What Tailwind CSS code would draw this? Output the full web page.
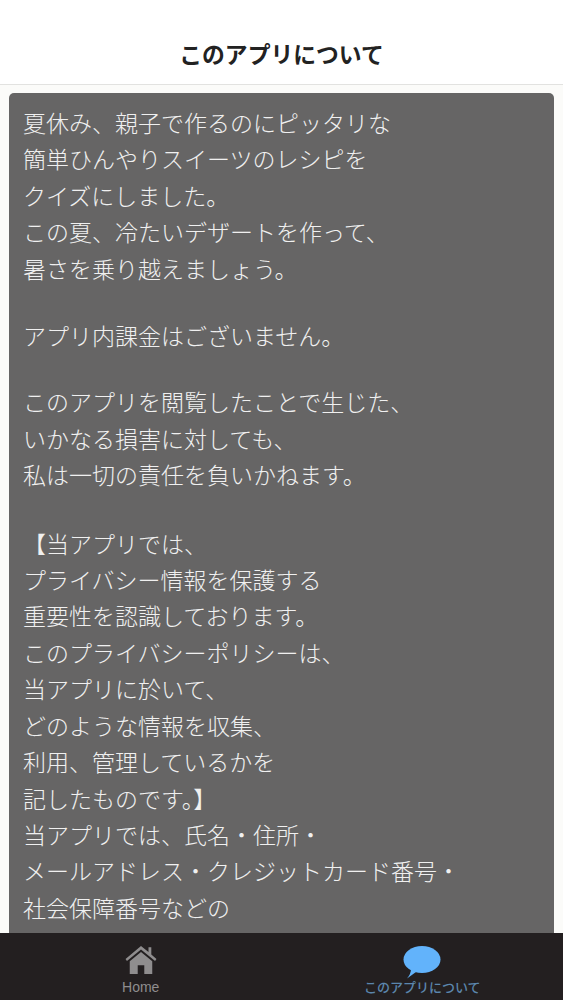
<!DOCTYPE html>
<html lang="ja">
<head>
    <meta charset="UTF-8">
    <meta name="viewport" content="width=device-width, initial-scale=1.0">
    <title>このアプリについて</title>
    <script src="https://cdn.jsdelivr.net/npm/@tailwindcss/browser@4"></script>
</head>
<body class="bg-[#fbfbf9] font-['Noto_Sans_CJK_JP',sans-serif]">
    <div class="h-[1000px] flex flex-col overflow-hidden">
        <header class="h-[85px] shrink-0 bg-white border-b border-[#e2e2e0] flex items-end justify-center pb-[14px]">
            <h1 class="text-[22.8px] leading-[32px] font-bold text-[#222]">このアプリについて</h1>
        </header>

        <main class="flex-1 min-h-0 overflow-hidden px-[9px] pt-2">
            <div class="bg-[#666565] rounded-[5px] pl-[14px] pr-2 pt-[11px] pb-4 text-[#f0f0f0] text-[23px] leading-[36.4px] font-light whitespace-nowrap">
                <p>夏休み、親子で作るのにピッタリな</p>
                <p>簡単ひんやりスイーツのレシピを</p>
                <p>クイズにしました。</p>
                <p>この夏、冷たいデザートを作って、</p>
                <p>暑さを乗り越えましょう。</p>
                <p class="mt-[31px]">アプリ内課金はございません。</p>
                <p class="mt-[30px]">このアプリを閲覧したことで生じた、</p>
                <p>いかなる損害に対しても、</p>
                <p>私は一切の責任を負いかねます。</p>
                <p class="mt-[32px]">【当アプリでは、</p>
                <p>プライバシー情報を保護する</p>
                <p>重要性を認識しております。</p>
                <p>このプライバシーポリシーは、</p>
                <p>当アプリに於いて、</p>
                <p>どのような情報を収集、</p>
                <p>利用、管理しているかを</p>
                <p>記したものです。】</p>
                <p>当アプリでは、氏名・住所・</p>
                <p>メールアドレス・クレジットカード番号・</p>
                <p>社会保障番号などの</p>
            </div>
        </main>

        <nav class="h-[67px] shrink-0 bg-[#231f20] flex">
            <div class="w-1/2 flex flex-col items-center pt-[12px]">
                <svg class="w-[34px] h-[30px]" viewBox="0 0 34 32" fill="#8f8d8e">
                    <path d="M17 1 L25 7.5 V2.5 H28 V10 L33.5 15 L32 17 L17 4.8 L2 17 L0.5 15 Z" />
                    <path d="M17 7.5 L29 17.3 V31 H20.5 V21.5 H13.5 V31 H5 V17.3 Z" />
                </svg>
                <span class="mt-[4px] text-[14px] leading-[16px] text-[#8f8d8e] font-['Liberation_Sans',sans-serif]">Home</span>
            </div>
            <div class="w-1/2 flex flex-col items-center pt-[13px]">
                <svg class="w-[38px] h-[33px]" viewBox="0 0 38 33" fill="#62b3fb">
                    <ellipse cx="19" cy="13.5" rx="18.5" ry="13.5" />
                    <path d="M8 23 L13 26 L4 32.5 Q8 28 8 23 Z" />
                </svg>
                <span class="text-[13px] leading-[16px] font-medium text-[#5b86ad]">このアプリについて</span>
            </div>
        </nav>
    </div>
</body>
</html>
